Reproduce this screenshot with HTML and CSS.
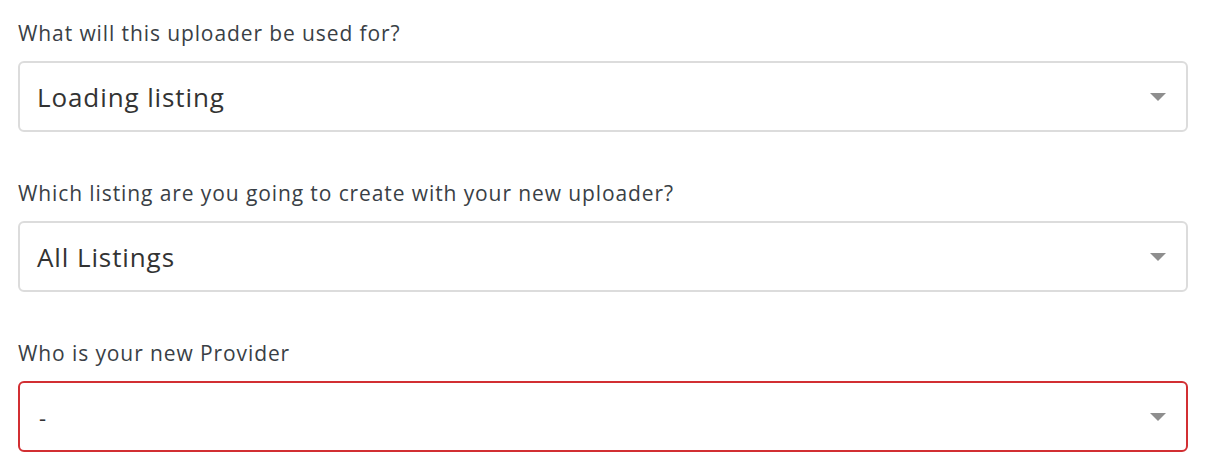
FILE: index.html
```html
<!DOCTYPE html>
<html>
<head>
<meta charset="utf-8">
<link rel="stylesheet" href="styles.css">
</head>
<body>
<form class="form">
  <div class="field">
    <label class="label">What will this uploader be used for?</label>
    <div class="select">
      <span class="value">Loading listing</span>
      <span class="caret"></span>
    </div>
  </div>
  <div class="field">
    <label class="label">Which listing are you going to create with your new uploader?</label>
    <div class="select">
      <span class="value">All Listings</span>
      <span class="caret"></span>
    </div>
  </div>
  <div class="field">
    <label class="label">Who is your new Provider</label>
    <div class="select select-error">
      <span class="value value-small">-</span>
      <span class="caret"></span>
    </div>
  </div>
</form>
</body>
</html>
```
FILE: styles.css
```css
html, body {
  margin: 0;
  padding: 0;
  background: #ffffff;
}
.form {
  display: flex;
  flex-direction: column;
  gap: 47px;
  padding: 19px 18px 0 18px;
  width: 1170px;
  font-family: "Open Sans", Lato, sans-serif;
}
.field {
  display: flex;
  flex-direction: column;
  gap: 14px;
}
.label {
  font-size: 21px;
  line-height: 28px;
  color: #3a3f46;
  letter-spacing: 0.9px;
  font-weight: 400;
}
.select {
  box-sizing: border-box;
  height: 71px;
  border: 2px solid #dcdcdc;
  border-radius: 6px;
  display: flex;
  align-items: center;
  justify-content: space-between;
  padding: 0 20px 0 17px;
}
.select-error {
  border-color: #d22f33;
}
.value {
  font-size: 26px;
  color: #333333;
  letter-spacing: 0.9px;
}
.value-small {
  font-size: 22px;
  padding-left: 2px;
}
.caret {
  width: 0;
  height: 0;
  border-left: 8px solid transparent;
  border-right: 8px solid transparent;
  border-top: 8px solid #8e8e8e;
}
```
